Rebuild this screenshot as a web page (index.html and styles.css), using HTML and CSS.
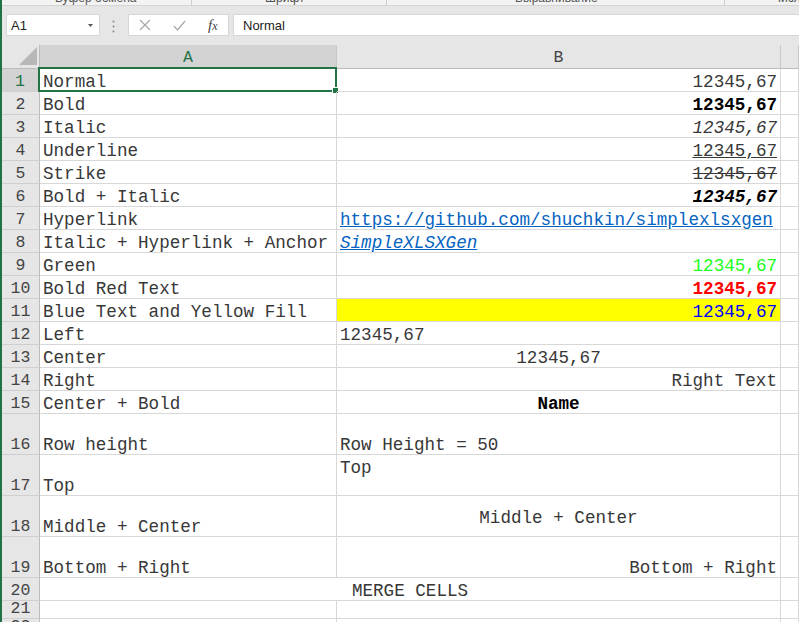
FILE: index.html
```html
<!DOCTYPE html>
<html lang="ru">
<head>
<meta charset="utf-8">
<title>SimpleXLSXGen</title>
<link rel="stylesheet" href="styles.css">
</head>
<body>
<div class="app">
  <div class="ribbon">
    <div class="grp g1"><span>Буфер обмена</span></div>
    <div class="grp g2"><span>Шрифт</span></div>
    <div class="grp g3"><span>Выравнивание</span></div>
    <div class="grp g4"><span>Число</span></div>
  </div>
  <div class="fbar">
    <div class="namebox">
      <span>A1</span>
      <svg class="dd" width="5" height="3" viewBox="0 0 5 3"><path d="M0 0H5L2.5 3Z" fill="#555"/></svg>
    </div>
    <svg class="grip" width="3" height="13" viewBox="0 0 3 13"><circle cx="1.5" cy="1.5" r="1" fill="#8a8a8a"/><circle cx="1.5" cy="6.5" r="1" fill="#8a8a8a"/><circle cx="1.5" cy="11.5" r="1" fill="#8a8a8a"/></svg>
    <div class="fbtns">
      <svg width="12" height="12" viewBox="0 0 12 12"><path d="M1 1L11 11M11 1L1 11" stroke="#a8a8a8" stroke-width="1.2" fill="none"/></svg>
      <svg width="13" height="11" viewBox="0 0 13 11"><path d="M1 6L4.5 10L12 1" stroke="#a8a8a8" stroke-width="1.2" fill="none"/></svg>
      <span class="fx">f<i>x</i></span>
    </div>
    <div class="finput">Normal</div>
  </div>
  <div class="sheet">
    <div class="corner"><svg width="18" height="18" viewBox="0 0 18 18"><path d="M18 0V18H0Z" fill="#b7b7b7"/></svg></div>
    <div class="ch sel">A</div>
    <div class="ch">B</div>
    <div class="ch"></div>

    <div class="rh sel">1</div><div class="c a1">Normal<span class="selbox"><span class="handle"></span></span></div><div class="c r">12345,67</div><div class="c"></div>
    <div class="rh">2</div><div class="c">Bold</div><div class="c r b">12345,67</div><div class="c"></div>
    <div class="rh">3</div><div class="c">Italic</div><div class="c r it">12345,67</div><div class="c"></div>
    <div class="rh">4</div><div class="c">Underline</div><div class="c r u">12345,67</div><div class="c"></div>
    <div class="rh">5</div><div class="c">Strike</div><div class="c r s">12345,67</div><div class="c"></div>
    <div class="rh">6</div><div class="c">Bold + Italic</div><div class="c r b it">12345,67</div><div class="c"></div>
    <div class="rh">7</div><div class="c">Hyperlink</div><div class="c link">https://github.com/shuchkin/simplexlsxgen</div><div class="c"></div>
    <div class="rh">8</div><div class="c">Italic + Hyperlink + Anchor</div><div class="c link it">SimpleXLSXGen</div><div class="c"></div>
    <div class="rh">9</div><div class="c">Green</div><div class="c r green">12345,67</div><div class="c"></div>
    <div class="rh">10</div><div class="c">Bold Red Text</div><div class="c r b red">12345,67</div><div class="c"></div>
    <div class="rh">11</div><div class="c">Blue Text and Yellow Fill</div><div class="c r blue yellow">12345,67</div><div class="c"></div>
    <div class="rh">12</div><div class="c">Left</div><div class="c">12345,67</div><div class="c"></div>
    <div class="rh">13</div><div class="c">Center</div><div class="c ctr">12345,67</div><div class="c"></div>
    <div class="rh">14</div><div class="c">Right</div><div class="c r">Right Text</div><div class="c"></div>
    <div class="rh">15</div><div class="c">Center + Bold</div><div class="c ctr b">Name</div><div class="c"></div>
    <div class="rh">16</div><div class="c">Row height</div><div class="c">Row Height = 50</div><div class="c"></div>
    <div class="rh">17</div><div class="c">Top</div><div class="c top">Top</div><div class="c"></div>
    <div class="rh">18</div><div class="c">Middle + Center</div><div class="c ctr mid">Middle + Center</div><div class="c"></div>
    <div class="rh">19</div><div class="c">Bottom + Right</div><div class="c r">Bottom + Right</div><div class="c"></div>
    <div class="rh">20</div><div class="c ctr merged">MERGE CELLS</div><div class="c"></div>
    <div class="rh">21</div><div class="c"></div><div class="c"></div><div class="c"></div>
    <div class="rh">22</div><div class="c"></div><div class="c"></div><div class="c"></div>
  </div>
</div>
</body>
</html>
```

FILE: styles.css
```css
html, body {
  margin: 0;
  padding: 0;
  background: #fff;
  overflow: hidden;
}

.app {
  width: 799px;
  height: 622px;
  box-sizing: border-box;
  border-left: 2px solid #217346;
  display: flex;
  flex-direction: column;
  overflow: hidden;
}

/* ribbon group labels (cut at top) */
.ribbon {
  height: 5px;
  flex: none;
  background: #f3f3f3;
  border-bottom: 1px solid #d4d4d4;
  display: flex;
  align-items: flex-end;
  overflow: hidden;
}
.grp {
  height: 5px;
  display: flex;
  align-items: flex-end;
  border-right: 1px solid #cfcfcf;
  box-sizing: border-box;
  overflow: hidden;
}
.grp span {
  display: block;
  font-family: "Liberation Sans", Arial, sans-serif;
  font-size: 12px;
  line-height: 14px;
  color: #555;
  white-space: nowrap;
}
.g1 { width: 190px; padding-left: 53px; }
.g2 { width: 195px; padding-left: 73px; }
.g3 { width: 338px; padding-left: 128px; }
.g4 { flex: 1; padding-left: 48px; border-right: none; }

/* formula bar */
.fbar {
  height: 39px;
  flex: none;
  box-sizing: border-box;
  background: #e6e6e6;
  padding: 8px 0 0 4px;
  display: flex;
  align-items: flex-start;
  font-family: "Liberation Sans", Arial, sans-serif;
  font-size: 13px;
  color: #222;
}
.namebox {
  width: 94px;
  height: 22px;
  box-sizing: border-box;
  background: #fff;
  border: 1px solid #d6d6d6;
  display: flex;
  align-items: center;
  padding: 0 6px 0 4px;
}
.namebox span { flex: 1; }
.grip {
  margin: 6px 0 0 12px;
}
.fbtns {
  margin-left: 13px;
  width: 101px;
  height: 22px;
  box-sizing: border-box;
  background: #fff;
  border: 1px solid #d6d6d6;
  display: flex;
  align-items: center;
  padding-left: 10px;
}
.fbtns svg:nth-child(2) { margin-left: 22px; }
.fx {
  margin-left: 22px;
  font-family: "Liberation Serif", "Times New Roman", serif;
  font-style: italic;
  font-size: 15px;
  color: #444;
}
.fx i { font-size: 12px; }
.finput {
  margin-left: 4px;
  flex: 1;
  height: 22px;
  box-sizing: border-box;
  background: #fff;
  border: 1px solid #d6d6d6;
  border-right: none;
  display: flex;
  align-items: center;
  padding-left: 9px;
}

/* sheet grid */
.sheet {
  flex: none;
  display: grid;
  grid-template-columns: 38px 297px 444px 1fr;
  grid-template-rows: 24px repeat(15, 23px) repeat(4, 41px) 23px 18px 18px;
  font-family: "Liberation Mono", "Courier New", monospace;
}

.corner {
  background: #e6e6e6;
  border-right: 1px solid #bcbcbc;
  border-bottom: 1px solid #bcbcbc;
  box-sizing: border-box;
  display: flex;
  align-items: flex-end;
  justify-content: flex-end;
  padding: 0 2px 3px 0;
}

.ch {
  background: #e6e6e6;
  border-right: 1px solid #c8c8c8;
  border-bottom: 1px solid #bcbcbc;
  box-sizing: border-box;
  display: flex;
  align-items: center;
  justify-content: center;
  font-size: 16.5px;
  color: #444;
  padding-top: 2px;
}
.ch.sel {
  background: #d3d3d3;
  color: #217346;
  border-bottom: 2px solid #217346;
}

.rh {
  background: #e6e6e6;
  border-right: 1px solid #bcbcbc;
  border-bottom: 1px solid #cfcfcf;
  box-sizing: border-box;
  display: flex;
  align-items: flex-end;
  justify-content: center;
  font-size: 16.5px;
  line-height: 18px;
  color: #444;
}
.rh.sel {
  background: #d3d3d3;
  color: #217346;
  border-right: 2px solid #217346;
}

.c {
  position: relative;
  border-right: 1px solid #d8d8d8;
  border-bottom: 1px solid #d8d8d8;
  box-sizing: border-box;
  display: flex;
  align-items: flex-end;
  justify-content: flex-start;
  padding: 0 3px;
  font-size: 17.6px;
  line-height: 18px;
  color: #383838;
  white-space: nowrap;
}
.c.r { justify-content: flex-end; }
.c.ctr { justify-content: center; }
.c.top { align-items: flex-start; padding-top: 4px; }
.c.mid { align-items: center; padding-top: 4px; }
.c.b { font-weight: bold; color: #000; }
.c.it { font-style: italic; }
.c.u { text-decoration: underline; }
.c.s { text-decoration: line-through; }
.c.link { color: #0563c1; text-decoration: underline; }
.c.green { color: #1bff1b; }
.c.red { color: #ff0000; }
.c.blue { color: #0000ff; }
.c.yellow { background: #ffff00; }
.c.merged { grid-column: 2 / 4; }

.selbox {
  position: absolute;
  left: -2px;
  top: -2px;
  right: -1px;
  bottom: -1px;
  border: 2px solid #217346;
  pointer-events: none;
}
.handle {
  position: absolute;
  right: -4px;
  bottom: -4px;
  width: 5px;
  height: 5px;
  background: #217346;
  border: 1px solid #fff;
}
```
